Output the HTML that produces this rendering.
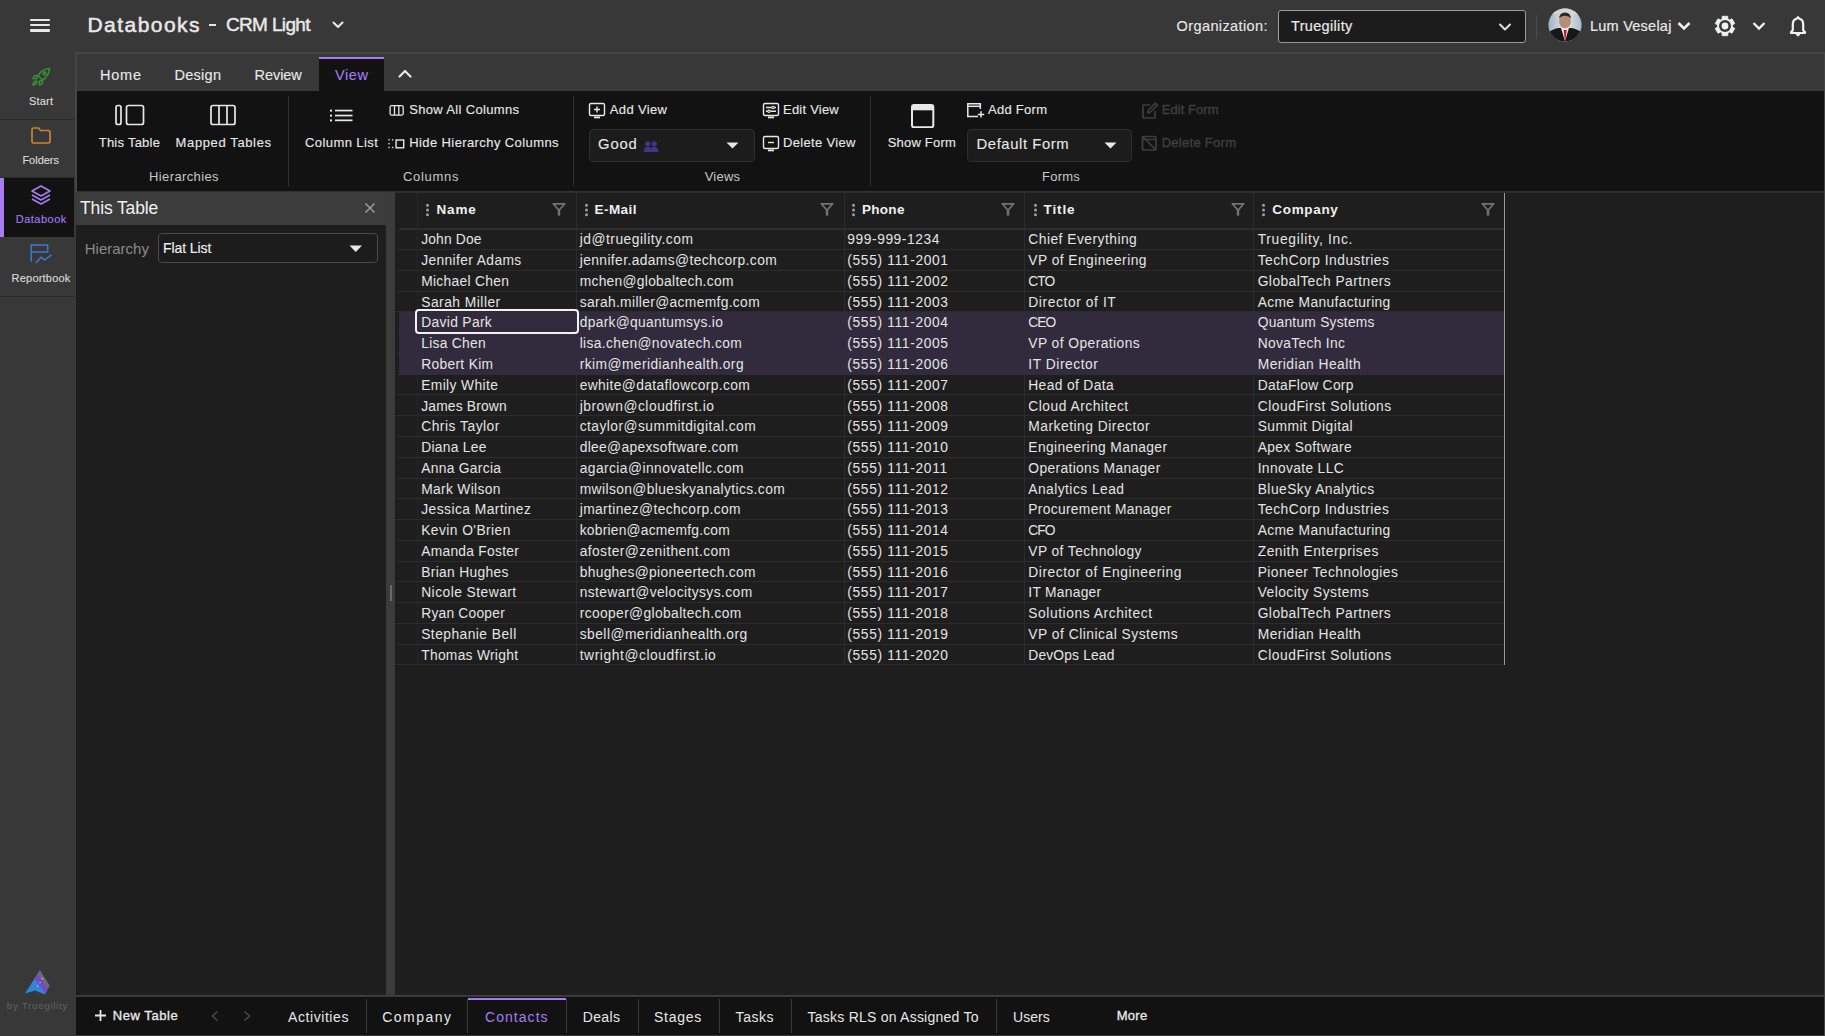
<!DOCTYPE html>
<html><head><meta charset="utf-8"><style>
html,body{margin:0;padding:0;}
body{width:1825px;height:1036px;overflow:hidden;position:relative;background:#383838;font-family:"Liberation Sans",sans-serif;}
.t{position:absolute;line-height:1;white-space:nowrap;}
.r{position:absolute;}
</style></head><body>
<div class="r" style="left:29.5px;top:18.6px;width:20px;height:2.4px;background:#e8e8e8;border-radius:1px;"></div><div class="r" style="left:29.5px;top:24.0px;width:20px;height:2.4px;background:#e8e8e8;border-radius:1px;"></div><div class="r" style="left:29.5px;top:29.4px;width:20px;height:2.4px;background:#e8e8e8;border-radius:1px;"></div><div class="t" style="left:87.50px;top:13.52px;font-size:21px;color:#e8e8e8;-webkit-text-stroke:0.5px #e8e8e8;letter-spacing:1.453px;">Databooks</div><div class="r" style="left:208.8px;top:24.2px;width:7.6px;height:2px;background:#e8e8e8;"></div><div class="t" style="left:226.00px;top:15.12px;font-size:19px;color:#e8e8e8;-webkit-text-stroke:0.45px #e8e8e8;letter-spacing:-0.659px;">CRM Light</div><svg class="r" style="left:330px;top:19px;" width="16" height="12" viewBox="0 0 16 12"><path d="M3.5 3.5 L8 8 L12.5 3.5" fill="none" stroke="#e8e8e8" stroke-width="2.1" stroke-linecap="round" stroke-linejoin="round"/></svg><div class="t" style="left:1176.60px;top:18.93px;font-size:14.5px;color:#e8e8e8;-webkit-text-stroke:0.12px #e8e8e8;letter-spacing:0.394px;">Organization:</div><div class="r" style="left:1278px;top:10px;width:246px;height:31px;border:1.5px solid #9a9a9a;border-radius:3px;background:#1c1c1c"></div><div class="t" style="left:1291.00px;top:18.73px;font-size:14.5px;color:#e8e8e8;-webkit-text-stroke:0.2px #e8e8e8;letter-spacing:0.334px;">Truegility</div><svg class="r" style="left:1496px;top:21px;" width="18" height="12" viewBox="0 0 18 12"><path d="M4 3.5 L9 8.5 L14 3.5" fill="none" stroke="#e0e0e0" stroke-width="2" stroke-linecap="round" stroke-linejoin="round"/></svg><div class="r" style="left:1536px;top:15px;width:1.2px;height:24px;background:#4e4e4e;"></div><svg class="r" style="left:1548px;top:8px;" width="34" height="34" viewBox="0 0 34 34"><defs><clipPath id="av"><circle cx="17" cy="17" r="16.6"/></clipPath><linearGradient id="avg" x1="0" y1="0" x2="1" y2="0"><stop offset="0" stop-color="#9fb0bf"/><stop offset="0.5" stop-color="#e4e8ea"/><stop offset="1" stop-color="#a9bccb"/></linearGradient></defs><g clip-path="url(#av)"><rect width="34" height="34" fill="url(#avg)"/><rect x="0" y="0" width="34" height="6" fill="#d8d4cf"/><path d="M-2 34 L-2 27 Q3 21 11 20 L23 20 Q31 21 36 27 L36 34Z" fill="#17171c"/><path d="M13 20 L17 33 L21 20Z" fill="#f0f0f0"/><path d="M15.6 22 L17 34 L18.8 22Z" fill="#c0182a"/><ellipse cx="17" cy="13.2" rx="5.8" ry="7.2" fill="#b98a74"/><path d="M11 10.5 Q11.5 4.5 17 4.5 Q22.5 4.5 23 10.5 Q21 7.5 17 7.8 Q13 7.5 11 10.5Z" fill="#2e2622"/></g></svg><div class="t" style="left:1590.00px;top:18.93px;font-size:14.5px;color:#e8e8e8;-webkit-text-stroke:0.2px #e8e8e8;letter-spacing:0.237px;">Lum Veselaj</div><svg class="r" style="left:1676px;top:20px;" width="16" height="12" viewBox="0 0 16 12"><path d="M2.5 3 L8 8.5 L13.5 3" fill="none" stroke="#f0f0f0" stroke-width="2.5" stroke-linecap="butt" stroke-linejoin="miter"/></svg><svg class="r" style="left:1713.4px;top:14.1px;" width="24" height="24" viewBox="0 0 24 24"><path d="M9.21 2.29 L14.79 2.29 L14.92 5.09 L16.52 6.02 L19.01 4.73 L21.80 9.56 L19.44 11.08 L19.44 12.92 L21.80 14.44 L19.01 19.27 L16.52 17.98 L14.92 18.91 L14.79 21.71 L9.21 21.71 L9.08 18.91 L7.48 17.98 L4.99 19.27 L2.20 14.44 L4.56 12.92 L4.56 11.08 L2.20 9.56 L4.99 4.73 L7.48 6.02 L9.08 5.09Z" fill="#f2f2f2" stroke="#f2f2f2" stroke-width="0.8" stroke-linejoin="round"/><circle cx="12" cy="12" r="6.0" fill="#383838"/><circle cx="12" cy="12" r="3.4" fill="#eef2f2"/></svg><svg class="r" style="left:1751px;top:20px;" width="16" height="12" viewBox="0 0 16 12"><path d="M2.5 3 L8 8.5 L13.5 3" fill="none" stroke="#f2f2f2" stroke-width="2.3" stroke-linecap="butt" stroke-linejoin="miter"/></svg><svg class="r" style="left:1789px;top:15px;" width="18" height="22" viewBox="0 0 18 22"><path d="M9 2.2 L10.2 3.6 Q14.2 4.6 14.2 9.5 L14.2 15.2 L16 17.2 L16 18 L2 18 L2 17.2 L3.8 15.2 L3.8 9.5 Q3.8 4.6 7.8 3.6Z" fill="none" stroke="#f2f2f2" stroke-width="2.2" stroke-linejoin="round"/><path d="M7.3 19.2 L10.7 19.2 L9 20.8Z" fill="#f2f2f2" stroke="#f2f2f2" stroke-width="1.2" stroke-linejoin="round"/></svg><div class="r" style="left:0px;top:119px;width:75px;height:1px;background:#2c2c2c;"></div><div class="r" style="left:0px;top:177px;width:75px;height:1px;background:#2c2c2c;"></div><div class="r" style="left:0px;top:178px;width:74px;height:59px;background:#121212;"></div><div class="r" style="left:0px;top:178px;width:4px;height:59px;background:#a57cf2;"></div><div class="r" style="left:0px;top:296px;width:75px;height:1px;background:#2c2c2c;"></div><svg class="r" style="left:30px;top:66px;" width="22" height="22" viewBox="0 0 22 22"><g fill="none" stroke="#3b8c37" stroke-width="1.6" stroke-linejoin="round"><path d="M19.5 2.5 Q12 3 8 9.5 L12.5 14 Q19 10 19.5 2.5Z"/><circle cx="14.5" cy="7.5" r="1.4"/><path d="M8 9.5 L4.5 9.8 L3 12.5 L6.5 12.8Z"/><path d="M12.5 14 L12.2 17.5 L9.5 19 L9.2 15.5Z"/><path d="M6 15 Q3 16 3 19 Q6 19 7 16Z"/></g></svg><div class="t" style="left:29.00px;top:96.19px;font-size:11px;color:#dcdcdc;-webkit-text-stroke:0.12px #dcdcdc;letter-spacing:0.197px;">Start</div><svg class="r" style="left:30px;top:126px;" width="22" height="19" viewBox="0 0 22 19"><path d="M2 3.5 Q2 2 3.5 2 L8.5 2 L10.5 4.5 L18.5 4.5 Q20 4.5 20 6 L20 15.5 Q20 17 18.5 17 L3.5 17 Q2 17 2 15.5Z" fill="none" stroke="#c9842f" stroke-width="1.7" stroke-linejoin="round"/></svg><div class="t" style="left:22.40px;top:155.19px;font-size:11px;color:#dcdcdc;-webkit-text-stroke:0.12px #dcdcdc;letter-spacing:-0.014px;">Folders</div><svg class="r" style="left:29px;top:184px;" width="24" height="22" viewBox="0 0 24 22"><g fill="none" stroke="#a57cf2" stroke-width="1.7" stroke-linejoin="round"><path d="M12 2 L21 7 L12 12 L3 7Z"/><path d="M3 11 L12 16 L21 11"/><path d="M3 15 L12 20 L21 15"/></g></svg><div class="t" style="left:15.70px;top:213.89px;font-size:11px;color:#a57cf2;-webkit-text-stroke:0.12px #a57cf2;letter-spacing:0.495px;">Databook</div><svg class="r" style="left:28px;top:242px;" width="26" height="24" viewBox="0 0 26 24"><g fill="none" stroke="#3b7ad0" stroke-width="1.5" stroke-linejoin="round"><path d="M3.2 19.8 L3.2 3 L19.7 3 L19.7 10 L3.2 10"/><path d="M7.9 21 L13.1 15.2 L16.6 18 L23.5 12.9"/></g></svg><div class="t" style="left:11.60px;top:273.19px;font-size:11px;color:#dcdcdc;-webkit-text-stroke:0.12px #dcdcdc;letter-spacing:0.208px;">Reportbook</div><svg class="r" style="left:20px;top:965px;" width="34" height="34" viewBox="0 0 34 34"><defs><clipPath id="lg"><path d="M19.8 5.2 L29.5 20.5 L25 29.5 L15 25.5 L5 28.5Z"/></clipPath></defs><g clip-path="url(#lg)"><rect width="34" height="34" fill="#2f86d6"/><path d="M14.5 13.6 L17.8 9 L29 24 L25.2 28.2Z" fill="#7a45c8"/><path d="M17.8 9 L20 5 L30 19 L27.3 23.9Z" fill="#6c6c6c"/></g><circle cx="22.2" cy="13.5" r="0.7" fill="#ddd"/><circle cx="20" cy="17.5" r="0.7" fill="#e6c8ff"/><circle cx="17.5" cy="21.3" r="0.7" fill="#bfe4ff"/></svg><div class="t" style="left:6.80px;top:1000.70px;font-size:9.8px;color:#626262;letter-spacing:0.685px;">by Truegility</div><div class="r" style="left:75px;top:52px;width:1750px;height:2px;background:#454545;"></div><div class="r" style="left:75px;top:52px;width:1.5px;height:140px;background:#454545;"></div><div class="r" style="left:76.5px;top:54px;width:1748.5px;height:37px;background:#393939;"></div><div class="r" style="left:76.5px;top:91px;width:1748.5px;height:100px;background:#121212;"></div><div class="r" style="left:319px;top:57px;width:65px;height:34px;background:#121212;"></div><div class="r" style="left:319px;top:57px;width:65px;height:2px;background:#a57cf2;"></div><div class="t" style="left:100.00px;top:68.33px;font-size:14.5px;color:#e8e8e8;-webkit-text-stroke:0.12px #e8e8e8;letter-spacing:0.762px;">Home</div><div class="t" style="left:174.60px;top:68.33px;font-size:14.5px;color:#e8e8e8;-webkit-text-stroke:0.12px #e8e8e8;letter-spacing:0.247px;">Design</div><div class="t" style="left:254.50px;top:68.33px;font-size:14.5px;color:#e8e8e8;-webkit-text-stroke:0.12px #e8e8e8;letter-spacing:-0.052px;">Review</div><div class="t" style="left:335.00px;top:68.33px;font-size:14.5px;color:#a57cf2;-webkit-text-stroke:0.12px #a57cf2;letter-spacing:0.608px;">View</div><svg class="r" style="left:397px;top:68px;" width="16" height="12" viewBox="0 0 16 12"><path d="M2.5 8.5 L8 3 L13.5 8.5" fill="none" stroke="#e8e8e8" stroke-width="2.2" stroke-linecap="round" stroke-linejoin="round"/></svg><svg class="r" style="left:114px;top:103px;" width="32" height="24" viewBox="0 0 32 24"><g fill="none" stroke="#e8e8e8" stroke-width="1.7"><rect x="2" y="2.5" width="5" height="19" rx="2"/><rect x="12.5" y="2.5" width="17" height="19" rx="2"/></g></svg><div class="t" style="left:98.70px;top:136.00px;font-size:13px;color:#e8e8e8;-webkit-text-stroke:0.12px #e8e8e8;letter-spacing:0.253px;">This Table</div><svg class="r" style="left:209px;top:103px;" width="28" height="24" viewBox="0 0 28 24"><g fill="none" stroke="#e8e8e8" stroke-width="1.7"><rect x="2" y="2.5" width="24" height="19" rx="2"/><path d="M10 2.5 L10 21.5 M18 2.5 L18 21.5"/></g></svg><div class="t" style="left:175.60px;top:136.00px;font-size:13px;color:#e8e8e8;-webkit-text-stroke:0.12px #e8e8e8;letter-spacing:0.621px;">Mapped Tables</div><div class="t" style="left:149.00px;top:170.00px;font-size:13px;color:#c8c8c8;letter-spacing:0.388px;">Hierarchies</div><div class="r" style="left:287.5px;top:96px;width:1.2px;height:90px;background:#303030;"></div><svg class="r" style="left:327px;top:106px;" width="28" height="18" viewBox="0 0 28 18"><g fill="#e8e8e8"><rect x="3" y="3.6" width="2" height="2"/><rect x="3" y="8.6" width="2" height="2"/><rect x="3" y="13.4" width="2" height="2"/><rect x="8" y="3.7" width="17.5" height="1.7"/><rect x="8" y="8.7" width="17.5" height="1.7"/><rect x="8" y="13.5" width="17.5" height="1.7"/></g></svg><div class="t" style="left:305.00px;top:136.00px;font-size:13px;color:#e8e8e8;-webkit-text-stroke:0.12px #e8e8e8;letter-spacing:0.416px;">Column List</div><svg class="r" style="left:387px;top:103px;" width="18" height="14" viewBox="0 0 18 14"><g fill="none" stroke="#e8e8e8" stroke-width="1.3"><rect x="3.1" y="2.7" width="13.1" height="9.4" rx="1.5"/><path d="M7.5 2.7 L7.5 12.1 M11.8 2.7 L11.8 12.1"/></g></svg><div class="t" style="left:409.20px;top:102.90px;font-size:13px;color:#e8e8e8;-webkit-text-stroke:0.12px #e8e8e8;letter-spacing:0.335px;">Show All Columns</div><svg class="r" style="left:386px;top:136px;" width="20" height="14" viewBox="0 0 20 14"><g fill="#e0e0e0"><rect x="2.3" y="3.1" width="1.4" height="1.4"/><rect x="2.3" y="7" width="1.4" height="1.4"/><rect x="2.3" y="10.8" width="1.4" height="1.4"/><rect x="5.9" y="3.1" width="1.4" height="1.4"/><rect x="5.9" y="10.8" width="1.4" height="1.4"/></g><rect x="10.1" y="4" width="7.6" height="7.8" fill="none" stroke="#e8e8e8" stroke-width="1.4"/></svg><div class="t" style="left:409.20px;top:135.80px;font-size:13px;color:#e8e8e8;-webkit-text-stroke:0.12px #e8e8e8;letter-spacing:0.402px;">Hide Hierarchy Columns</div><div class="t" style="left:403.00px;top:170.00px;font-size:13px;color:#c8c8c8;letter-spacing:0.703px;">Columns</div><div class="r" style="left:573px;top:96px;width:1.2px;height:90px;background:#303030;"></div><svg class="r" style="left:587px;top:101px;" width="20" height="18" viewBox="0 0 20 18"><g fill="none" stroke="#e8e8e8" stroke-width="1.4"><rect x="2.5" y="2.5" width="15" height="12" rx="1.5"/><path d="M10 5.5 L10 11.5 M7 8.5 L13 8.5"/></g><rect x="7" y="15.5" width="6" height="1.8" fill="#e8e8e8"/></svg><div class="t" style="left:609.80px;top:102.90px;font-size:13px;color:#e8e8e8;-webkit-text-stroke:0.12px #e8e8e8;letter-spacing:0.353px;">Add View</div><div class="r" style="left:589px;top:129px;width:164px;height:31px;border:1px solid #2e2e2e;border-radius:4px;background:#1c1c1c"></div><div class="t" style="left:598.00px;top:136.67px;font-size:14.8px;color:#e8e8e8;-webkit-text-stroke:0.1px #e8e8e8;letter-spacing:0.871px;">Good</div><svg class="r" style="left:643px;top:140px;" width="16" height="13" viewBox="0 0 16 13"><g fill="#47338a"><circle cx="4.8" cy="3.8" r="2.6"/><circle cx="11.2" cy="3.8" r="2.6"/><path d="M0.8 12 Q0.8 6.8 4.8 6.8 Q8.8 6.8 8.8 12Z"/><path d="M7.2 12 Q7.2 6.8 11.2 6.8 Q15.2 6.8 15.2 12Z"/></g></svg><svg class="r" style="left:726px;top:142px;" width="13" height="7" viewBox="0 0 13 7"><path d="M0.5 0.5 L12.5 0.5 L6.5 6.5Z" fill="#e8e8e8"/></svg><svg class="r" style="left:761px;top:101px;" width="20" height="18" viewBox="0 0 20 18"><g fill="none" stroke="#e8e8e8" stroke-width="1.4"><rect x="2.5" y="2.5" width="15" height="12" rx="1.5"/><path d="M5 6.5 L15 6.5 M5 10.3 L15 10.3"/></g><g fill="#121212" stroke="#e8e8e8" stroke-width="1.1"><circle cx="12" cy="6.5" r="1.2"/><circle cx="8" cy="10.3" r="1.2"/></g><rect x="7" y="15.5" width="6" height="1.8" fill="#e8e8e8"/></svg><div class="t" style="left:783.00px;top:102.90px;font-size:13px;color:#e8e8e8;-webkit-text-stroke:0.12px #e8e8e8;letter-spacing:0.223px;">Edit View</div><svg class="r" style="left:761px;top:134px;" width="20" height="18" viewBox="0 0 20 18"><g fill="none" stroke="#e8e8e8" stroke-width="1.4"><rect x="2.5" y="2.5" width="15" height="12" rx="1.5"/><path d="M7 8.5 L13 8.5"/></g><rect x="7" y="15.5" width="6" height="1.8" fill="#e8e8e8"/></svg><div class="t" style="left:783.00px;top:135.80px;font-size:13px;color:#e8e8e8;-webkit-text-stroke:0.12px #e8e8e8;letter-spacing:0.324px;">Delete View</div><div class="t" style="left:704.70px;top:170.00px;font-size:13px;color:#c8c8c8;letter-spacing:0.212px;">Views</div><div class="r" style="left:870px;top:96px;width:1.2px;height:90px;background:#303030;"></div><svg class="r" style="left:909px;top:102px;" width="26" height="26" viewBox="0 0 26 26"><rect x="3" y="3" width="21.3" height="22.3" rx="2" fill="none" stroke="#e8e8e8" stroke-width="2"/><rect x="3" y="3" width="21.3" height="5.3" fill="#e8e8e8"/></svg><div class="t" style="left:887.70px;top:136.00px;font-size:13px;color:#e8e8e8;-webkit-text-stroke:0.12px #e8e8e8;letter-spacing:0.201px;">Show Form</div><svg class="r" style="left:965px;top:101px;" width="22" height="19" viewBox="0 0 22 19"><g fill="none" stroke="#e8e8e8" stroke-width="1.5"><path d="M13 15.6 L2.8 15.6 L2.8 2.8 L15.3 2.8 L15.3 8"/><path d="M2.8 5.3 L15.3 5.3"/><path d="M16 10.2 L16 16.6 M12.8 13.4 L19.2 13.4"/></g></svg><div class="t" style="left:988.00px;top:102.90px;font-size:13px;color:#e8e8e8;-webkit-text-stroke:0.12px #e8e8e8;letter-spacing:0.276px;">Add Form</div><div class="r" style="left:967px;top:129px;width:163px;height:31px;border:1px solid #2e2e2e;border-radius:4px;background:#1c1c1c"></div><div class="t" style="left:976.50px;top:136.67px;font-size:14.8px;color:#e8e8e8;-webkit-text-stroke:0.1px #e8e8e8;letter-spacing:0.605px;">Default Form</div><svg class="r" style="left:1104px;top:142px;" width="13" height="7" viewBox="0 0 13 7"><path d="M0.5 0.5 L12.5 0.5 L6.5 6.5Z" fill="#e8e8e8"/></svg><svg class="r" style="left:1140px;top:101px;" width="19" height="19" viewBox="0 0 19 19"><g fill="none" stroke="#3e3e3e" stroke-width="1.7" stroke-linejoin="round"><path d="M10 4 L3 4 L3 17 L15 17 L15 10"/><path d="M8 12 L8.5 9 L15.5 2 L17.5 4 L10.5 11Z"/></g></svg><div class="t" style="left:1161.70px;top:102.90px;font-size:13px;color:#3e3e3e;-webkit-text-stroke:0.4px #3e3e3e;letter-spacing:0.056px;">Edit Form</div><svg class="r" style="left:1140px;top:134px;" width="19" height="19" viewBox="0 0 19 19"><g fill="none" stroke="#3e3e3e" stroke-width="1.7"><rect x="2.5" y="2.5" width="13.5" height="13.5" rx="1"/><path d="M2.5 5.5 L16.5 5.5 M3 3 L16 16"/></g></svg><div class="t" style="left:1161.70px;top:135.80px;font-size:13px;color:#3e3e3e;-webkit-text-stroke:0.4px #3e3e3e;letter-spacing:0.280px;">Delete Form</div><div class="t" style="left:1042.00px;top:170.00px;font-size:13px;color:#c8c8c8;letter-spacing:0.236px;">Forms</div><div class="r" style="left:76.5px;top:190.8px;width:1748.5px;height:1.4px;background:#323232;"></div><div class="r" style="left:76px;top:192px;width:310px;height:33px;background:#3c3c3c;"></div><div class="r" style="left:76px;top:225px;width:310px;height:770px;background:#1e1e1e;"></div><div class="t" style="left:80.00px;top:200.49px;font-size:17.5px;color:#f0f0f0;letter-spacing:-0.128px;">This Table</div><svg class="r" style="left:362px;top:200px;" width="16" height="16" viewBox="0 0 16 16"><path d="M3.5 3.5 L12.5 12.5 M12.5 3.5 L3.5 12.5" stroke="#9a9a9a" stroke-width="1.5"/></svg><div class="t" style="left:84.70px;top:240.60px;font-size:15px;color:#8a8a8a;letter-spacing:0.012px;">Hierarchy</div><div class="r" style="left:158px;top:233px;width:218px;height:28px;border:1px solid #4a4a4a;border-radius:4px;background:#1c1c1c"></div><div class="t" style="left:163.00px;top:241.45px;font-size:14px;color:#f0f0f0;-webkit-text-stroke:0.15px #f0f0f0;letter-spacing:-0.088px;">Flat List</div><svg class="r" style="left:349px;top:245px;" width="14" height="8" viewBox="0 0 14 8"><path d="M0.5 0.5 L13 0.5 L6.75 7Z" fill="#e8e8e8"/></svg><div class="r" style="left:385.8px;top:192px;width:9.2px;height:803px;background:#3b3b3b;"></div><div class="r" style="left:389.5px;top:585px;width:2px;height:16px;background:#6a6a6a;"></div><div class="r" style="left:395px;top:192px;width:1430px;height:803px;background:#1e1e1e;"></div><div class="r" style="left:395px;top:192px;width:1430px;height:1px;background:#2e2e2e;"></div><div class="r" style="left:399px;top:227.9px;width:1105.4px;height:2px;background:#2e2e2e;"></div><div class="r" style="left:417.4px;top:193px;width:1px;height:471.86px;background:#252525;"></div><div class="r" style="left:576.3px;top:193px;width:1px;height:471.86px;background:#2c2c2c;"></div><div class="r" style="left:843.6px;top:193px;width:1px;height:471.86px;background:#2c2c2c;"></div><div class="r" style="left:1024.4px;top:193px;width:1px;height:471.86px;background:#2c2c2c;"></div><div class="r" style="left:1253.3px;top:193px;width:1px;height:471.86px;background:#2c2c2c;"></div><div class="r" style="left:1504px;top:193px;width:1.2px;height:471.86px;background:#9a9a9a;"></div><div class="r" style="left:397px;top:249.16px;width:1107px;height:1px;background:#2c2c2c;"></div><div class="r" style="left:397px;top:269.92px;width:1107px;height:1px;background:#2c2c2c;"></div><div class="r" style="left:397px;top:290.68px;width:1107px;height:1px;background:#2c2c2c;"></div><div class="r" style="left:397px;top:311.44px;width:1107px;height:1px;background:#2c2c2c;"></div><div class="r" style="left:397px;top:332.2px;width:1107px;height:1px;background:#2c2c2c;"></div><div class="r" style="left:397px;top:352.96px;width:1107px;height:1px;background:#2c2c2c;"></div><div class="r" style="left:397px;top:373.72px;width:1107px;height:1px;background:#2c2c2c;"></div><div class="r" style="left:397px;top:394.48px;width:1107px;height:1px;background:#2c2c2c;"></div><div class="r" style="left:397px;top:415.24px;width:1107px;height:1px;background:#2c2c2c;"></div><div class="r" style="left:397px;top:436.0px;width:1107px;height:1px;background:#2c2c2c;"></div><div class="r" style="left:397px;top:456.76px;width:1107px;height:1px;background:#2c2c2c;"></div><div class="r" style="left:397px;top:477.52px;width:1107px;height:1px;background:#2c2c2c;"></div><div class="r" style="left:397px;top:498.28px;width:1107px;height:1px;background:#2c2c2c;"></div><div class="r" style="left:397px;top:519.04px;width:1107px;height:1px;background:#2c2c2c;"></div><div class="r" style="left:397px;top:539.8px;width:1107px;height:1px;background:#2c2c2c;"></div><div class="r" style="left:397px;top:560.56px;width:1107px;height:1px;background:#2c2c2c;"></div><div class="r" style="left:397px;top:581.32px;width:1107px;height:1px;background:#2c2c2c;"></div><div class="r" style="left:397px;top:602.08px;width:1107px;height:1px;background:#2c2c2c;"></div><div class="r" style="left:397px;top:622.84px;width:1107px;height:1px;background:#2c2c2c;"></div><div class="r" style="left:397px;top:643.6px;width:1107px;height:1px;background:#2c2c2c;"></div><div class="r" style="left:397px;top:664.36px;width:1107px;height:1px;background:#2c2c2c;"></div><div class="r" style="left:399px;top:312.44px;width:1105px;height:62.28px;background:#322b3d;"></div><div class="t" style="left:421.20px;top:233.42px;font-size:13.8px;color:#e4e4e4;letter-spacing:0.171px;">John Doe</div><div class="t" style="left:579.70px;top:233.42px;font-size:13.8px;color:#e4e4e4;letter-spacing:0.513px;">jd@truegility.com</div><div class="t" style="left:847.30px;top:233.42px;font-size:13.8px;color:#e4e4e4;letter-spacing:0.559px;">999-999-1234</div><div class="t" style="left:1028.30px;top:233.42px;font-size:13.8px;color:#e4e4e4;letter-spacing:0.483px;">Chief Everything</div><div class="t" style="left:1257.70px;top:233.42px;font-size:13.8px;color:#e4e4e4;letter-spacing:0.690px;">Truegility, Inc.</div><div class="t" style="left:421.20px;top:254.18px;font-size:13.8px;color:#e4e4e4;letter-spacing:0.378px;">Jennifer Adams</div><div class="t" style="left:579.70px;top:254.18px;font-size:13.8px;color:#e4e4e4;letter-spacing:0.402px;">jennifer.adams@techcorp.com</div><div class="t" style="left:847.30px;top:254.18px;font-size:13.8px;color:#e4e4e4;letter-spacing:0.649px;">(555) 111-2001</div><div class="t" style="left:1028.30px;top:254.18px;font-size:13.8px;color:#e4e4e4;letter-spacing:0.448px;">VP of Engineering</div><div class="t" style="left:1257.70px;top:254.18px;font-size:13.8px;color:#e4e4e4;letter-spacing:0.470px;">TechCorp Industries</div><div class="t" style="left:421.20px;top:274.94px;font-size:13.8px;color:#e4e4e4;letter-spacing:0.313px;">Michael Chen</div><div class="t" style="left:579.70px;top:274.94px;font-size:13.8px;color:#e4e4e4;letter-spacing:0.288px;">mchen@globaltech.com</div><div class="t" style="left:847.30px;top:274.94px;font-size:13.8px;color:#e4e4e4;letter-spacing:0.649px;">(555) 111-2002</div><div class="t" style="left:1028.30px;top:274.94px;font-size:13.8px;color:#e4e4e4;letter-spacing:-0.939px;">CTO</div><div class="t" style="left:1257.70px;top:274.94px;font-size:13.8px;color:#e4e4e4;letter-spacing:0.446px;">GlobalTech Partners</div><div class="t" style="left:421.20px;top:295.70px;font-size:13.8px;color:#e4e4e4;letter-spacing:0.493px;">Sarah Miller</div><div class="t" style="left:579.70px;top:295.70px;font-size:13.8px;color:#e4e4e4;letter-spacing:0.348px;">sarah.miller@acmemfg.com</div><div class="t" style="left:847.30px;top:295.70px;font-size:13.8px;color:#e4e4e4;letter-spacing:0.649px;">(555) 111-2003</div><div class="t" style="left:1028.30px;top:295.70px;font-size:13.8px;color:#e4e4e4;letter-spacing:0.596px;">Director of IT</div><div class="t" style="left:1257.70px;top:295.70px;font-size:13.8px;color:#e4e4e4;letter-spacing:0.355px;">Acme Manufacturing</div><div class="t" style="left:421.20px;top:316.46px;font-size:13.8px;color:#e4e4e4;letter-spacing:0.343px;">David Park</div><div class="t" style="left:579.70px;top:316.46px;font-size:13.8px;color:#e4e4e4;letter-spacing:0.318px;">dpark@quantumsys.io</div><div class="t" style="left:847.30px;top:316.46px;font-size:13.8px;color:#e4e4e4;letter-spacing:0.649px;">(555) 111-2004</div><div class="t" style="left:1028.30px;top:316.46px;font-size:13.8px;color:#e4e4e4;letter-spacing:-1.028px;">CEO</div><div class="t" style="left:1257.70px;top:316.46px;font-size:13.8px;color:#e4e4e4;letter-spacing:0.232px;">Quantum Systems</div><div class="t" style="left:421.20px;top:337.22px;font-size:13.8px;color:#e4e4e4;letter-spacing:0.294px;">Lisa Chen</div><div class="t" style="left:579.70px;top:337.22px;font-size:13.8px;color:#e4e4e4;letter-spacing:0.371px;">lisa.chen@novatech.com</div><div class="t" style="left:847.30px;top:337.22px;font-size:13.8px;color:#e4e4e4;letter-spacing:0.649px;">(555) 111-2005</div><div class="t" style="left:1028.30px;top:337.22px;font-size:13.8px;color:#e4e4e4;letter-spacing:0.439px;">VP of Operations</div><div class="t" style="left:1257.70px;top:337.22px;font-size:13.8px;color:#e4e4e4;letter-spacing:0.325px;">NovaTech Inc</div><div class="t" style="left:421.20px;top:357.98px;font-size:13.8px;color:#e4e4e4;letter-spacing:0.314px;">Robert Kim</div><div class="t" style="left:579.70px;top:357.98px;font-size:13.8px;color:#e4e4e4;letter-spacing:0.434px;">rkim@meridianhealth.org</div><div class="t" style="left:847.30px;top:357.98px;font-size:13.8px;color:#e4e4e4;letter-spacing:0.649px;">(555) 111-2006</div><div class="t" style="left:1028.30px;top:357.98px;font-size:13.8px;color:#e4e4e4;letter-spacing:0.544px;">IT Director</div><div class="t" style="left:1257.70px;top:357.98px;font-size:13.8px;color:#e4e4e4;letter-spacing:0.454px;">Meridian Health</div><div class="t" style="left:421.20px;top:378.74px;font-size:13.8px;color:#e4e4e4;letter-spacing:0.384px;">Emily White</div><div class="t" style="left:579.70px;top:378.74px;font-size:13.8px;color:#e4e4e4;letter-spacing:0.369px;">ewhite@dataflowcorp.com</div><div class="t" style="left:847.30px;top:378.74px;font-size:13.8px;color:#e4e4e4;letter-spacing:0.649px;">(555) 111-2007</div><div class="t" style="left:1028.30px;top:378.74px;font-size:13.8px;color:#e4e4e4;letter-spacing:0.364px;">Head of Data</div><div class="t" style="left:1257.70px;top:378.74px;font-size:13.8px;color:#e4e4e4;letter-spacing:0.313px;">DataFlow Corp</div><div class="t" style="left:421.20px;top:399.50px;font-size:13.8px;color:#e4e4e4;letter-spacing:0.185px;">James Brown</div><div class="t" style="left:579.70px;top:399.50px;font-size:13.8px;color:#e4e4e4;letter-spacing:0.516px;">jbrown@cloudfirst.io</div><div class="t" style="left:847.30px;top:399.50px;font-size:13.8px;color:#e4e4e4;letter-spacing:0.649px;">(555) 111-2008</div><div class="t" style="left:1028.30px;top:399.50px;font-size:13.8px;color:#e4e4e4;letter-spacing:0.505px;">Cloud Architect</div><div class="t" style="left:1257.70px;top:399.50px;font-size:13.8px;color:#e4e4e4;letter-spacing:0.529px;">CloudFirst Solutions</div><div class="t" style="left:421.20px;top:420.26px;font-size:13.8px;color:#e4e4e4;letter-spacing:0.511px;">Chris Taylor</div><div class="t" style="left:579.70px;top:420.26px;font-size:13.8px;color:#e4e4e4;letter-spacing:0.459px;">ctaylor@summitdigital.com</div><div class="t" style="left:847.30px;top:420.26px;font-size:13.8px;color:#e4e4e4;letter-spacing:0.649px;">(555) 111-2009</div><div class="t" style="left:1028.30px;top:420.26px;font-size:13.8px;color:#e4e4e4;letter-spacing:0.504px;">Marketing Director</div><div class="t" style="left:1257.70px;top:420.26px;font-size:13.8px;color:#e4e4e4;letter-spacing:0.466px;">Summit Digital</div><div class="t" style="left:421.20px;top:441.02px;font-size:13.8px;color:#e4e4e4;letter-spacing:0.277px;">Diana Lee</div><div class="t" style="left:579.70px;top:441.02px;font-size:13.8px;color:#e4e4e4;letter-spacing:0.325px;">dlee@apexsoftware.com</div><div class="t" style="left:847.30px;top:441.02px;font-size:13.8px;color:#e4e4e4;letter-spacing:0.649px;">(555) 111-2010</div><div class="t" style="left:1028.30px;top:441.02px;font-size:13.8px;color:#e4e4e4;letter-spacing:0.376px;">Engineering Manager</div><div class="t" style="left:1257.70px;top:441.02px;font-size:13.8px;color:#e4e4e4;letter-spacing:0.348px;">Apex Software</div><div class="t" style="left:421.20px;top:461.78px;font-size:13.8px;color:#e4e4e4;letter-spacing:0.311px;">Anna Garcia</div><div class="t" style="left:579.70px;top:461.78px;font-size:13.8px;color:#e4e4e4;letter-spacing:0.434px;">agarcia@innovatellc.com</div><div class="t" style="left:847.30px;top:461.78px;font-size:13.8px;color:#e4e4e4;letter-spacing:0.663px;">(555) 111-2011</div><div class="t" style="left:1028.30px;top:461.78px;font-size:13.8px;color:#e4e4e4;letter-spacing:0.363px;">Operations Manager</div><div class="t" style="left:1257.70px;top:461.78px;font-size:13.8px;color:#e4e4e4;letter-spacing:0.351px;">Innovate LLC</div><div class="t" style="left:421.20px;top:482.54px;font-size:13.8px;color:#e4e4e4;letter-spacing:0.328px;">Mark Wilson</div><div class="t" style="left:579.70px;top:482.54px;font-size:13.8px;color:#e4e4e4;letter-spacing:0.401px;">mwilson@blueskyanalytics.com</div><div class="t" style="left:847.30px;top:482.54px;font-size:13.8px;color:#e4e4e4;letter-spacing:0.649px;">(555) 111-2012</div><div class="t" style="left:1028.30px;top:482.54px;font-size:13.8px;color:#e4e4e4;letter-spacing:0.454px;">Analytics Lead</div><div class="t" style="left:1257.70px;top:482.54px;font-size:13.8px;color:#e4e4e4;letter-spacing:0.472px;">BlueSky Analytics</div><div class="t" style="left:421.20px;top:503.30px;font-size:13.8px;color:#e4e4e4;letter-spacing:0.464px;">Jessica Martinez</div><div class="t" style="left:579.70px;top:503.30px;font-size:13.8px;color:#e4e4e4;letter-spacing:0.382px;">jmartinez@techcorp.com</div><div class="t" style="left:847.30px;top:503.30px;font-size:13.8px;color:#e4e4e4;letter-spacing:0.649px;">(555) 111-2013</div><div class="t" style="left:1028.30px;top:503.30px;font-size:13.8px;color:#e4e4e4;letter-spacing:0.321px;">Procurement Manager</div><div class="t" style="left:1257.70px;top:503.30px;font-size:13.8px;color:#e4e4e4;letter-spacing:0.470px;">TechCorp Industries</div><div class="t" style="left:421.20px;top:524.06px;font-size:13.8px;color:#e4e4e4;letter-spacing:0.437px;">Kevin O&#x27;Brien</div><div class="t" style="left:579.70px;top:524.06px;font-size:13.8px;color:#e4e4e4;letter-spacing:0.232px;">kobrien@acmemfg.com</div><div class="t" style="left:847.30px;top:524.06px;font-size:13.8px;color:#e4e4e4;letter-spacing:0.649px;">(555) 111-2014</div><div class="t" style="left:1028.30px;top:524.06px;font-size:13.8px;color:#e4e4e4;letter-spacing:-0.958px;">CFO</div><div class="t" style="left:1257.70px;top:524.06px;font-size:13.8px;color:#e4e4e4;letter-spacing:0.355px;">Acme Manufacturing</div><div class="t" style="left:421.20px;top:544.82px;font-size:13.8px;color:#e4e4e4;letter-spacing:0.278px;">Amanda Foster</div><div class="t" style="left:579.70px;top:544.82px;font-size:13.8px;color:#e4e4e4;letter-spacing:0.417px;">afoster@zenithent.com</div><div class="t" style="left:847.30px;top:544.82px;font-size:13.8px;color:#e4e4e4;letter-spacing:0.649px;">(555) 111-2015</div><div class="t" style="left:1028.30px;top:544.82px;font-size:13.8px;color:#e4e4e4;letter-spacing:0.413px;">VP of Technology</div><div class="t" style="left:1257.70px;top:544.82px;font-size:13.8px;color:#e4e4e4;letter-spacing:0.513px;">Zenith Enterprises</div><div class="t" style="left:421.20px;top:565.58px;font-size:13.8px;color:#e4e4e4;letter-spacing:0.325px;">Brian Hughes</div><div class="t" style="left:579.70px;top:565.58px;font-size:13.8px;color:#e4e4e4;letter-spacing:0.311px;">bhughes@pioneertech.com</div><div class="t" style="left:847.30px;top:565.58px;font-size:13.8px;color:#e4e4e4;letter-spacing:0.649px;">(555) 111-2016</div><div class="t" style="left:1028.30px;top:565.58px;font-size:13.8px;color:#e4e4e4;letter-spacing:0.544px;">Director of Engineering</div><div class="t" style="left:1257.70px;top:565.58px;font-size:13.8px;color:#e4e4e4;letter-spacing:0.449px;">Pioneer Technologies</div><div class="t" style="left:421.20px;top:586.34px;font-size:13.8px;color:#e4e4e4;letter-spacing:0.466px;">Nicole Stewart</div><div class="t" style="left:579.70px;top:586.34px;font-size:13.8px;color:#e4e4e4;letter-spacing:0.422px;">nstewart@velocitysys.com</div><div class="t" style="left:847.30px;top:586.34px;font-size:13.8px;color:#e4e4e4;letter-spacing:0.649px;">(555) 111-2017</div><div class="t" style="left:1028.30px;top:586.34px;font-size:13.8px;color:#e4e4e4;letter-spacing:0.287px;">IT Manager</div><div class="t" style="left:1257.70px;top:586.34px;font-size:13.8px;color:#e4e4e4;letter-spacing:0.445px;">Velocity Systems</div><div class="t" style="left:421.20px;top:607.10px;font-size:13.8px;color:#e4e4e4;letter-spacing:0.228px;">Ryan Cooper</div><div class="t" style="left:579.70px;top:607.10px;font-size:13.8px;color:#e4e4e4;letter-spacing:0.379px;">rcooper@globaltech.com</div><div class="t" style="left:847.30px;top:607.10px;font-size:13.8px;color:#e4e4e4;letter-spacing:0.649px;">(555) 111-2018</div><div class="t" style="left:1028.30px;top:607.10px;font-size:13.8px;color:#e4e4e4;letter-spacing:0.565px;">Solutions Architect</div><div class="t" style="left:1257.70px;top:607.10px;font-size:13.8px;color:#e4e4e4;letter-spacing:0.446px;">GlobalTech Partners</div><div class="t" style="left:421.20px;top:627.86px;font-size:13.8px;color:#e4e4e4;letter-spacing:0.465px;">Stephanie Bell</div><div class="t" style="left:579.70px;top:627.86px;font-size:13.8px;color:#e4e4e4;letter-spacing:0.471px;">sbell@meridianhealth.org</div><div class="t" style="left:847.30px;top:627.86px;font-size:13.8px;color:#e4e4e4;letter-spacing:0.649px;">(555) 111-2019</div><div class="t" style="left:1028.30px;top:627.86px;font-size:13.8px;color:#e4e4e4;letter-spacing:0.511px;">VP of Clinical Systems</div><div class="t" style="left:1257.70px;top:627.86px;font-size:13.8px;color:#e4e4e4;letter-spacing:0.454px;">Meridian Health</div><div class="t" style="left:421.20px;top:648.62px;font-size:13.8px;color:#e4e4e4;letter-spacing:0.294px;">Thomas Wright</div><div class="t" style="left:579.70px;top:648.62px;font-size:13.8px;color:#e4e4e4;letter-spacing:0.580px;">twright@cloudfirst.io</div><div class="t" style="left:847.30px;top:648.62px;font-size:13.8px;color:#e4e4e4;letter-spacing:0.649px;">(555) 111-2020</div><div class="t" style="left:1028.30px;top:648.62px;font-size:13.8px;color:#e4e4e4;letter-spacing:0.171px;">DevOps Lead</div><div class="t" style="left:1257.70px;top:648.62px;font-size:13.8px;color:#e4e4e4;letter-spacing:0.529px;">CloudFirst Solutions</div><div class="r" style="left:415px;top:308.74px;width:163.5px;height:25px;border:2.5px solid #f2f2f2;border-radius:4px;box-sizing:border-box"></div><div class="t" style="left:436.40px;top:203.17px;font-size:13.5px;color:#f0f0f0;font-weight:bold;letter-spacing:0.871px;">Name</div><svg class="r" style="left:425.4px;top:203px;" width="5" height="14" viewBox="0 0 5 14"><g fill="#a0a0a0"><circle cx="2.5" cy="2.3" r="1.5"/><circle cx="2.5" cy="7" r="1.5"/><circle cx="2.5" cy="11.7" r="1.5"/></g></svg><svg class="r" style="left:552px;top:202.3px;" width="14" height="14.5" viewBox="0 0 14 14.5"><path d="M1.2 1.8 L12.8 1.8 L7 8.2Z" fill="none" stroke="#747474" stroke-width="1.7" stroke-linejoin="round"/><rect x="5.8" y="7" width="2.4" height="6.6" fill="#747474"/></svg><div class="t" style="left:594.50px;top:203.17px;font-size:13.5px;color:#f0f0f0;font-weight:bold;letter-spacing:0.448px;">E-Mail</div><svg class="r" style="left:583.5px;top:203px;" width="5" height="14" viewBox="0 0 5 14"><g fill="#a0a0a0"><circle cx="2.5" cy="2.3" r="1.5"/><circle cx="2.5" cy="7" r="1.5"/><circle cx="2.5" cy="11.7" r="1.5"/></g></svg><svg class="r" style="left:819.7px;top:202.3px;" width="14" height="14.5" viewBox="0 0 14 14.5"><path d="M1.2 1.8 L12.8 1.8 L7 8.2Z" fill="none" stroke="#747474" stroke-width="1.7" stroke-linejoin="round"/><rect x="5.8" y="7" width="2.4" height="6.6" fill="#747474"/></svg><div class="t" style="left:862.00px;top:203.17px;font-size:13.5px;color:#f0f0f0;font-weight:bold;letter-spacing:0.289px;">Phone</div><svg class="r" style="left:851px;top:203px;" width="5" height="14" viewBox="0 0 5 14"><g fill="#a0a0a0"><circle cx="2.5" cy="2.3" r="1.5"/><circle cx="2.5" cy="7" r="1.5"/><circle cx="2.5" cy="11.7" r="1.5"/></g></svg><svg class="r" style="left:1001.4px;top:202.3px;" width="14" height="14.5" viewBox="0 0 14 14.5"><path d="M1.2 1.8 L12.8 1.8 L7 8.2Z" fill="none" stroke="#747474" stroke-width="1.7" stroke-linejoin="round"/><rect x="5.8" y="7" width="2.4" height="6.6" fill="#747474"/></svg><div class="t" style="left:1043.60px;top:203.17px;font-size:13.5px;color:#f0f0f0;font-weight:bold;letter-spacing:0.865px;">Title</div><svg class="r" style="left:1032.6px;top:203px;" width="5" height="14" viewBox="0 0 5 14"><g fill="#a0a0a0"><circle cx="2.5" cy="2.3" r="1.5"/><circle cx="2.5" cy="7" r="1.5"/><circle cx="2.5" cy="11.7" r="1.5"/></g></svg><svg class="r" style="left:1230.5px;top:202.3px;" width="14" height="14.5" viewBox="0 0 14 14.5"><path d="M1.2 1.8 L12.8 1.8 L7 8.2Z" fill="none" stroke="#747474" stroke-width="1.7" stroke-linejoin="round"/><rect x="5.8" y="7" width="2.4" height="6.6" fill="#747474"/></svg><div class="t" style="left:1272.30px;top:203.17px;font-size:13.5px;color:#f0f0f0;font-weight:bold;letter-spacing:0.668px;">Company</div><svg class="r" style="left:1261.3px;top:203px;" width="5" height="14" viewBox="0 0 5 14"><g fill="#a0a0a0"><circle cx="2.5" cy="2.3" r="1.5"/><circle cx="2.5" cy="7" r="1.5"/><circle cx="2.5" cy="11.7" r="1.5"/></g></svg><svg class="r" style="left:1481.3px;top:202.3px;" width="14" height="14.5" viewBox="0 0 14 14.5"><path d="M1.2 1.8 L12.8 1.8 L7 8.2Z" fill="none" stroke="#747474" stroke-width="1.7" stroke-linejoin="round"/><rect x="5.8" y="7" width="2.4" height="6.6" fill="#747474"/></svg><div class="r" style="left:75.5px;top:995px;width:1749.5px;height:1.2px;background:#3f3f3f;"></div><div class="r" style="left:75.5px;top:996.5px;width:1749.5px;height:38.5px;background:#121212;"></div><div class="r" style="left:75.5px;top:1034.8px;width:1749.5px;height:1.2px;background:#3a3a3a;"></div><svg class="r" style="left:94px;top:1009px;" width="13" height="13" viewBox="0 0 13 13"><path d="M6.5 1 L6.5 12 M1 6.5 L12 6.5" stroke="#e8e8e8" stroke-width="1.8"/></svg><div class="t" style="left:112.70px;top:1009.00px;font-size:13px;color:#e8e8e8;-webkit-text-stroke:0.35px #e8e8e8;letter-spacing:0.569px;">New Table</div><svg class="r" style="left:210px;top:1010px;" width="10" height="12" viewBox="0 0 10 12"><path d="M7.5 1.5 L2.5 6 L7.5 10.5" fill="none" stroke="#4a4a4a" stroke-width="1.5"/></svg><svg class="r" style="left:242px;top:1010px;" width="10" height="12" viewBox="0 0 10 12"><path d="M2.5 1.5 L7.5 6 L2.5 10.5" fill="none" stroke="#4a4a4a" stroke-width="1.5"/></svg><div class="t" style="left:288.00px;top:1009.75px;font-size:14px;color:#e8e8e8;letter-spacing:0.574px;">Activities</div><div class="t" style="left:382.30px;top:1009.75px;font-size:14px;color:#e8e8e8;letter-spacing:1.463px;">Company</div><div class="t" style="left:485.00px;top:1009.75px;font-size:14px;color:#a57cf2;letter-spacing:1.053px;">Contacts</div><div class="t" style="left:582.70px;top:1009.75px;font-size:14px;color:#e8e8e8;letter-spacing:0.382px;">Deals</div><div class="t" style="left:654.00px;top:1009.75px;font-size:14px;color:#e8e8e8;letter-spacing:0.738px;">Stages</div><div class="t" style="left:735.60px;top:1009.75px;font-size:14px;color:#e8e8e8;letter-spacing:0.557px;">Tasks</div><div class="t" style="left:807.60px;top:1009.75px;font-size:14px;color:#e8e8e8;letter-spacing:0.231px;">Tasks RLS on Assigned To</div><div class="t" style="left:1013.00px;top:1009.75px;font-size:14px;color:#e8e8e8;letter-spacing:0.065px;">Users</div><div class="r" style="left:365.5px;top:998.5px;width:1px;height:34px;background:#3a3a3a;"></div><div class="r" style="left:996px;top:998.5px;width:1px;height:34px;background:#3a3a3a;"></div><div class="r" style="left:637.7px;top:998.5px;width:1px;height:34px;background:#3a3a3a;"></div><div class="r" style="left:718.6px;top:998.5px;width:1px;height:34px;background:#3a3a3a;"></div><div class="r" style="left:790.6px;top:998.5px;width:1px;height:34px;background:#3a3a3a;"></div><div class="r" style="left:467.4px;top:998.5px;width:1px;height:34px;background:#3a3a3a;"></div><div class="r" style="left:565.6px;top:998.5px;width:1px;height:34px;background:#3a3a3a;"></div><div class="r" style="left:468px;top:998.4px;width:97.6px;height:1.8px;background:#a57cf2;"></div><div class="t" style="left:1116.70px;top:1009.00px;font-size:13px;color:#e8e8e8;-webkit-text-stroke:0.35px #e8e8e8;letter-spacing:0.287px;">More</div><div class="r" style="left:1824px;top:52px;width:1px;height:984px;background:#454545;"></div>
</body></html>
